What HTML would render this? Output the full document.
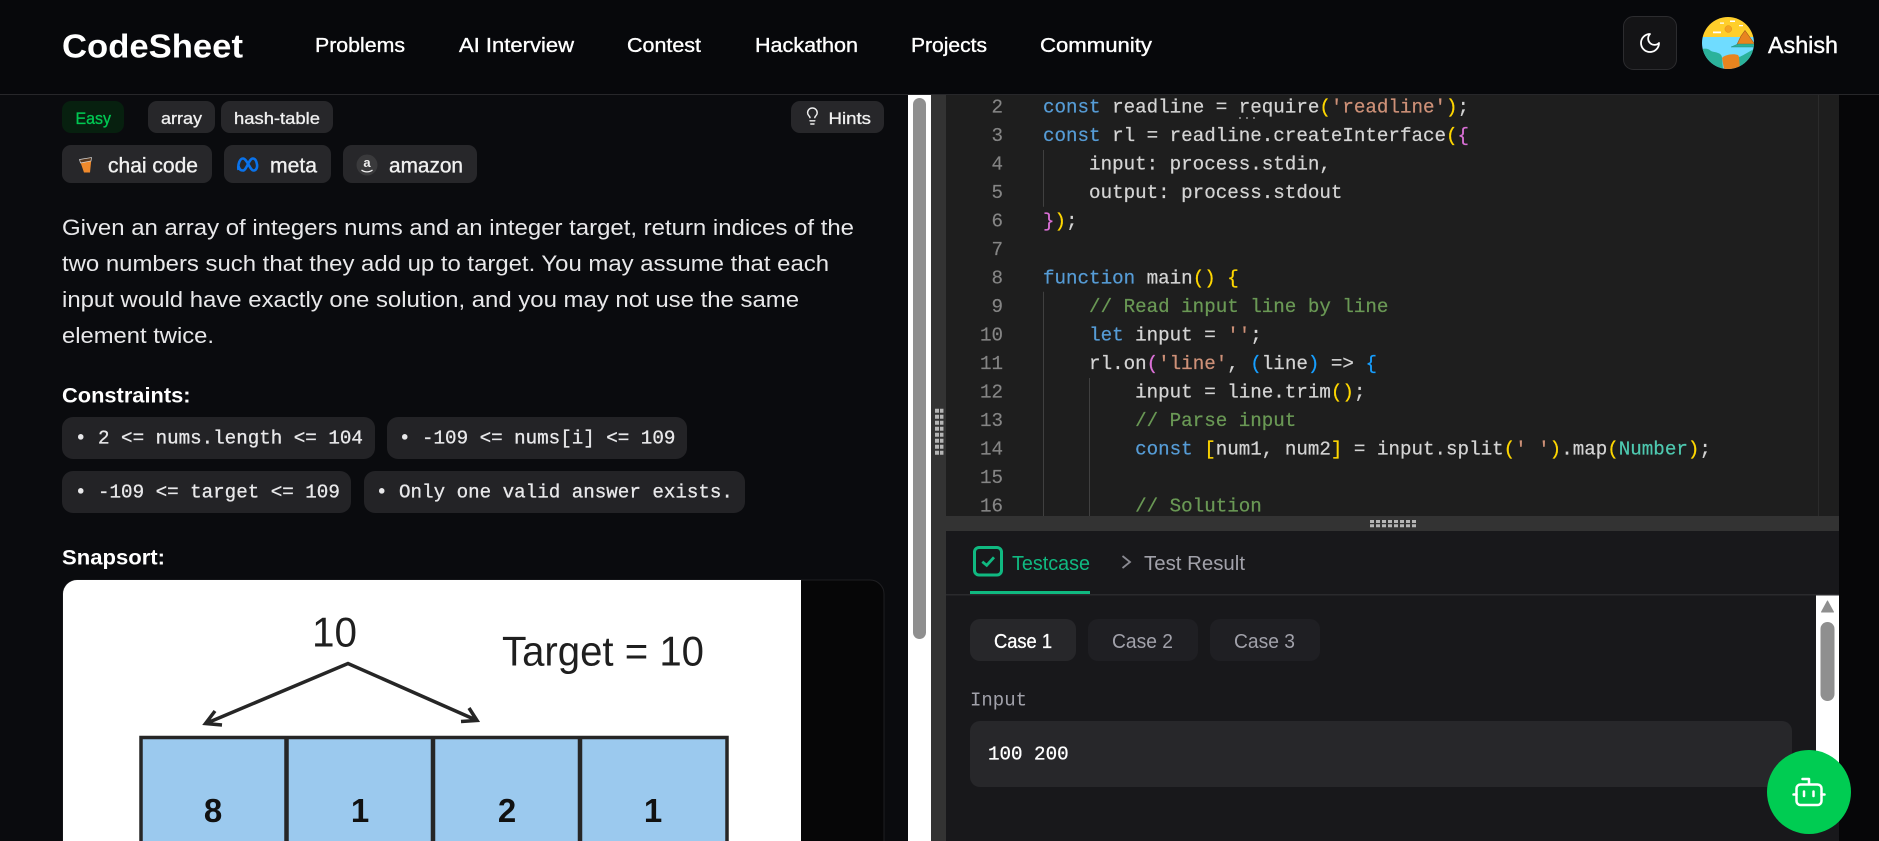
<!DOCTYPE html>
<html lang="en">
<head>
<meta charset="utf-8">
<title>CodeSheet</title>
<style>
html,body{margin:0;padding:0;width:1879px;height:841px;overflow:hidden;background:#060608}
svg{display:block;position:absolute;left:0;top:0}
text{font-family:"Liberation Sans",Arial,sans-serif;white-space:pre}
.m{font-family:"Liberation Mono",monospace;font-size:19.2px}
.c{font-family:"Liberation Mono",monospace;font-size:19.2px;fill:#d4d4d4;stroke:#d4d4d4;stroke-width:.22px}
.n{fill:#858585;stroke:#858585;stroke-width:.15px;text-anchor:end;font-family:"Liberation Mono",monospace;font-size:19.2px}
.k{fill:#569cd6;stroke:#569cd6}.s{fill:#ce9178;stroke:#ce9178}.g{fill:#6a9955;stroke:#6a9955}.y{fill:#ffd700;stroke:#ffd700}.p{fill:#da70d6;stroke:#da70d6}.b{fill:#179fff;stroke:#179fff}.t{fill:#4ec9b0;stroke:#4ec9b0}
.nav{font-size:20px;fill:#fff;stroke:#fff;stroke-width:.35px}
.tag{font-size:16.8px;fill:#f0f0f0;stroke:#f0f0f0;stroke-width:.3px}
.co{font-size:21px;fill:#f0f0f0;stroke:#f0f0f0;stroke-width:.35px}
.d{font-size:22.4px;fill:#e8e8ea}
.h{font-size:21.6px;fill:#fff;font-weight:bold}
.pill{fill:#e8e8ea;stroke:#e8e8ea;stroke-width:.3px}
.tab{font-size:20px;fill:#a1a1aa}
</style>
</head>
<body>
<svg xmlns="http://www.w3.org/2000/svg" width="1879" height="841" viewBox="0 0 1879 841">
<defs>
<clipPath id="ed"><rect x="946" y="95" width="893" height="421"/></clipPath>
<clipPath id="av"><circle cx="1728" cy="43" r="26"/></clipPath>
<clipPath id="im"><path d="M63 841V594a14 14 0 0 1 14-14H801V841Z"/></clipPath>
</defs>

<!-- backgrounds -->
<rect x="0" y="95" width="908" height="746" fill="#0a0b0e"/>
<rect x="908" y="95" width="23" height="746" fill="#fff"/>
<rect x="913" y="98" width="13" height="541" rx="6.5" fill="#8f8f8f"/>
<rect x="931" y="95" width="15" height="746" fill="#333"/>
<path d="M937 408.7V455" stroke="#b5b5b5" stroke-width="4" stroke-dasharray="4 2"/>
<path d="M941.7 408.7V455" stroke="#b5b5b5" stroke-width="3.5" stroke-dasharray="4 2"/>
<rect x="946" y="95" width="893" height="421" fill="#1e1e1e"/>
<rect x="946" y="516" width="893" height="15" fill="#333"/>
<path d="M1370 521.5H1416M1370 525.7H1416" stroke="#b5b5b5" stroke-width="3" stroke-dasharray="4 2"/>
<rect x="946" y="531" width="893" height="310" fill="#18181b"/>
<rect x="1839" y="95" width="40" height="746" fill="#060608"/>

<!-- header -->
<rect x="0" y="0" width="1879" height="94" fill="#07080b"/>
<rect x="0" y="94" width="1879" height="1" fill="#27272a"/>
<text x="62" y="57.3" font-size="33" font-weight="bold" fill="#fff" textLength="181" lengthAdjust="spacingAndGlyphs">CodeSheet</text>
<text class="nav" x="315" y="52" textLength="90" lengthAdjust="spacingAndGlyphs">Problems</text>
<text class="nav" x="459" y="52" textLength="115" lengthAdjust="spacingAndGlyphs">AI Interview</text>
<text class="nav" x="627" y="52" textLength="74" lengthAdjust="spacingAndGlyphs">Contest</text>
<text class="nav" x="755" y="52" textLength="103" lengthAdjust="spacingAndGlyphs">Hackathon</text>
<text class="nav" x="911" y="52" textLength="76" lengthAdjust="spacingAndGlyphs">Projects</text>
<text class="nav" x="1040" y="52" textLength="112" lengthAdjust="spacingAndGlyphs">Community</text>
<rect x="1623.5" y="16.5" width="53" height="53" rx="10" fill="#141416" stroke="#2c2c2f"/>
<path transform="translate(1638 31)" d="M12 3a6 6 0 0 0 9 9 9 9 0 1 1-9-9Z" fill="none" stroke="#fff" stroke-width="1.8" stroke-linejoin="round"/>
<g clip-path="url(#av)">
<rect x="1702" y="17" width="52" height="20" fill="#ffcf2b"/>
<rect x="1702" y="37" width="52" height="32" fill="#6fdcff"/>
<circle cx="1728.3" cy="29" r="3.4" fill="#f5a623" stroke="#e08a1e" stroke-width=".5"/>
<path d="M1713 31.500h8v1.800h-8zM1730 20.500h5v1.500h-5zM1720 22.500h4v1.300h-4zM1739 25h4v1.200h-4z" fill="#fff"/>
<path d="M1737 44.500L1741 36L1745 30.500L1749 36L1755 44.500Z" fill="#e8841f" stroke="#9c5a1a" stroke-width=".6"/>
<path d="M1731 47L1738 44H1756V47Z" fill="#2bb29b" stroke="#1e7f70" stroke-width=".4"/>
<path d="M1702 49c4-1 7 0 9 2 2 1 5 1 7 2 3 1 4 3 4 5l1 11h-21Z" fill="#2bb29b"/>
<path d="M1722 58c2-3 11-5 16-3 2 3 3 9 1 14h-15Z" fill="#e8841f"/>
<path d="M1740 69l-1-12c3-1 6-3 15-8v20Z" fill="#2bb29b"/>
</g>
<text x="1768" y="53" font-size="23" fill="#fff" stroke="#fff" stroke-width=".4" textLength="70" lengthAdjust="spacingAndGlyphs">Ashish</text>

<!-- badges -->
<rect x="62" y="101" width="62" height="32" rx="9" fill="#07200f"/>
<text class="tag" x="75.500" y="124" style="fill:#00c853;stroke:#00c853" textLength="35.500" lengthAdjust="spacingAndGlyphs">Easy</text>
<rect x="148" y="101" width="67" height="32" rx="9" fill="#27272a"/>
<text class="tag" x="161" y="124" textLength="41" lengthAdjust="spacingAndGlyphs">array</text>
<rect x="221" y="101" width="112" height="32" rx="9" fill="#27272a"/>
<text class="tag" x="234" y="124" textLength="86" lengthAdjust="spacingAndGlyphs">hash-table</text>
<rect x="791" y="101" width="93" height="32" rx="9" fill="#27272a"/>
<path transform="translate(802.800 106.400) scale(.8)" d="M15 14c.2-1 .7-1.7 1.500-2.500 1-.9 1.500-2.200 1.500-3.500A6 6 0 0 0 6 8c0 1 .2 2.200 1.500 3.500.7.7 1.300 1.500 1.500 2.500M9 18h6M10 22h4" fill="none" stroke="#f0f0f0" stroke-width="1.800" stroke-linecap="round"/>
<text class="tag" x="828.500" y="124" textLength="42.500" lengthAdjust="spacingAndGlyphs">Hints</text>

<rect x="62" y="145" width="150" height="38" rx="9" fill="#27272a"/>
<path d="M79.500 159.500L91.500 157.500L90 172.500H84Z" fill="#f08a2c"/>
<path d="M79.500 159.500L91.500 157.500L91 161L80.500 163Z" fill="#5a3a20" stroke="#d8d8d8" stroke-width=".7"/>
<text class="co" x="108" y="172.700" textLength="90" lengthAdjust="spacingAndGlyphs">chai code</text>
<rect x="224" y="145" width="107" height="38" rx="9" fill="#27272a"/>
<path d="M238.500 170C237.500 164 240 158.500 243 158.500C247 158.500 250 170.500 253.500 170.500C256.500 170.500 257.500 167 257 164.500C256.500 161 255 158.500 252.800 158.500C249 158.500 246.500 170.500 243 170.500C240.500 170.500 239 169 238.500 166" fill="none" stroke="#0a72ea" stroke-width="2.600"/>
<text class="co" x="270" y="172.700" textLength="47" lengthAdjust="spacingAndGlyphs">meta</text>
<rect x="343" y="145" width="134" height="38" rx="9" fill="#27272a"/>
<circle cx="367" cy="165" r="10.500" fill="#3a3a3c"/>
<text x="367" y="167" font-size="13" font-weight="bold" fill="#f0f0f0" text-anchor="middle">a</text>
<path d="M361.500 170c3 2.500 8 2.500 11 0" fill="none" stroke="#f0f0f0" stroke-width="1.200"/>
<text class="co" x="389" y="172.700" textLength="74" lengthAdjust="spacingAndGlyphs">amazon</text>

<!-- description -->
<text class="d" x="62" y="235" textLength="792" lengthAdjust="spacingAndGlyphs">Given an array of integers nums and an integer target, return indices of the</text>
<text class="d" x="62" y="271" textLength="767" lengthAdjust="spacingAndGlyphs">two numbers such that they add up to target. You may assume that each</text>
<text class="d" x="62" y="307" textLength="737" lengthAdjust="spacingAndGlyphs">input would have exactly one solution, and you may not use the same</text>
<text class="d" x="62" y="343" textLength="152" lengthAdjust="spacingAndGlyphs">element twice.</text>

<text class="h" x="62" y="402.700" textLength="128.500" lengthAdjust="spacingAndGlyphs">Constraints:</text>
<rect x="62" y="417" width="313" height="42" rx="11" fill="#232326"/>
<text class="m pill" x="75" y="443.500">• 2 &lt;= nums.length &lt;= 104</text>
<rect x="387" y="417" width="300" height="42" rx="11" fill="#232326"/>
<text class="m pill" x="399" y="443.500">• -109 &lt;= nums[i] &lt;= 109</text>
<rect x="62" y="471" width="289" height="42" rx="11" fill="#232326"/>
<text class="m pill" x="75" y="497.500">• -109 &lt;= target &lt;= 109</text>
<rect x="364" y="471" width="381" height="42" rx="11" fill="#232326"/>
<text class="m pill" x="376" y="497.500">• Only one valid answer exists.</text>

<text class="h" x="62" y="564.500" textLength="103" lengthAdjust="spacingAndGlyphs">Snapsort:</text>

<!-- image -->
<rect x="63" y="580" width="821" height="300" rx="14" fill="#060607" stroke="#1f1f22"/>
<g clip-path="url(#im)">
<rect x="63" y="580" width="738" height="261" fill="#fff"/>
<text x="312" y="646.700" font-size="42" fill="#1f1f1f" textLength="45" lengthAdjust="spacingAndGlyphs">10</text>
<text x="502" y="665.700" font-size="42" fill="#1f1f1f" textLength="202" lengthAdjust="spacingAndGlyphs">Target = 10</text>
<path d="M207 723L348 663.500L476 720M222 725L205.500 723.500L215 711M461 721.500L477 720.500L469 708" fill="none" stroke="#262626" stroke-width="3.500"/>
<rect x="141" y="737.500" width="586" height="120" fill="#9bc9ee" stroke="#262626" stroke-width="3.500"/>
<path d="M286.500 736V841M433 736V841M580 736V841" stroke="#262626" stroke-width="4.500"/>
<g font-size="33" font-weight="bold" fill="#111" text-anchor="middle">
<text x="213" y="822">8</text><text x="360" y="822">1</text><text x="507" y="822">2</text><text x="653" y="822">1</text>
</g>
</g>

<!-- editor -->
<path d="M1043.500 150V206.700M1043.500 291.700V516M1089.500 378V516" stroke="#404040" stroke-width="1"/>
<path d="M1818.500 95V516" stroke="#2b2b2b"/>
<g clip-path="url(#ed)">
<g transform="translate(0 -1.7)">
<text class="n" x="1003" y="114">2</text>
<text class="n" x="1003" y="142.500">3</text>
<text class="n" x="1003" y="171">4</text>
<text class="n" x="1003" y="199.500">5</text>
<text class="n" x="1003" y="228">6</text>
<text class="n" x="1003" y="256.500">7</text>
<text class="n" x="1003" y="285">8</text>
<text class="n" x="1003" y="313.500">9</text>
<text class="n" x="1003" y="342">10</text>
<text class="n" x="1003" y="370.500">11</text>
<text class="n" x="1003" y="399">12</text>
<text class="n" x="1003" y="427.500">13</text>
<text class="n" x="1003" y="456">14</text>
<text class="n" x="1003" y="484.500">15</text>
<text class="n" x="1003" y="513">16</text>
<text class="c" x="1043" y="114"><tspan class="k">const</tspan> readline = require<tspan class="y">(</tspan><tspan class="s">'readline'</tspan><tspan class="y">)</tspan>;</text>
<text class="c" x="1043" y="142.500"><tspan class="k">const</tspan> rl = readline.createInterface<tspan class="y">(</tspan><tspan class="p">{</tspan></text>
<text class="c" x="1043" y="171">    input: process.stdin,</text>
<text class="c" x="1043" y="199.500">    output: process.stdout</text>
<text class="c" x="1043" y="228"><tspan class="p">}</tspan><tspan class="y">)</tspan>;</text>
<text class="c" x="1043" y="285"><tspan class="k">function</tspan> main<tspan class="y">() {</tspan></text>
<text class="c" x="1043" y="313.500"><tspan class="g">    // Read input line by line</tspan></text>
<text class="c" x="1043" y="342">    <tspan class="k">let</tspan> input = <tspan class="s">''</tspan>;</text>
<text class="c" x="1043" y="370.500">    rl.on<tspan class="p">(</tspan><tspan class="s">'line'</tspan>, <tspan class="b">(</tspan>line<tspan class="b">)</tspan> =&gt; <tspan class="b">{</tspan></text>
<text class="c" x="1043" y="399">        input = line.trim<tspan class="y">()</tspan>;</text>
<text class="c" x="1043" y="427.500"><tspan class="g">        // Parse input</tspan></text>
<text class="c" x="1043" y="456">        <tspan class="k">const</tspan> <tspan class="y">[</tspan>num1, num2<tspan class="y">]</tspan> = input.split<tspan class="y">(</tspan><tspan class="s">' '</tspan><tspan class="y">)</tspan>.map<tspan class="y">(</tspan><tspan class="t">Number</tspan><tspan class="y">)</tspan>;</text>
<text class="c" x="1043" y="513"><tspan class="g">        // Solution</tspan></text>
</g>
<path d="M1239 118h2M1246 118h2M1253 118h2" stroke="#999" stroke-width="1.500"/>
</g>

<!-- bottom panel -->
<rect x="974.500" y="547.500" width="27" height="27.500" rx="4.500" fill="none" stroke="#10b981" stroke-width="3"/>
<path d="M982.300 561.700L986.700 565.300L994 557.300" fill="none" stroke="#10b981" stroke-width="2.800"/>
<text class="tab" x="1012" y="570" style="fill:#10b981" textLength="78" lengthAdjust="spacingAndGlyphs">Testcase</text>
<path d="M1122.500 556L1130 562L1122.500 568" fill="none" stroke="#8a8a92" stroke-width="1.800"/>
<text class="tab" x="1144" y="570" textLength="101" lengthAdjust="spacingAndGlyphs">Test Result</text>
<rect x="946" y="594" width="893" height="1.500" fill="#2a2a2d"/>
<rect x="970" y="591" width="120" height="3" fill="#10b981"/>

<rect x="1816" y="595.500" width="23" height="200" fill="#fff"/>
<path d="M1827.500 601L1821.500 612H1833.500Z" fill="#8f8f8f" stroke="#8f8f8f" stroke-linejoin="round"/>
<rect x="1820.500" y="622" width="14" height="79" rx="7" fill="#8f8f8f"/>

<rect x="970" y="619" width="106" height="42" rx="10" fill="#27272a"/>
<text class="tab" x="994" y="648" style="fill:#fff;stroke:#fff;stroke-width:.3px" textLength="58" lengthAdjust="spacingAndGlyphs">Case 1</text>
<rect x="1088" y="619" width="110" height="42" rx="10" fill="#1f1f23"/>
<text class="tab" x="1112" y="648" textLength="61" lengthAdjust="spacingAndGlyphs">Case 2</text>
<rect x="1210" y="619" width="110" height="42" rx="10" fill="#1f1f23"/>
<text class="tab" x="1234" y="648" textLength="61" lengthAdjust="spacingAndGlyphs">Case 3</text>

<text class="m" x="970" y="705.700" style="font-size:19px;fill:#a1a1aa">Input</text>
<rect x="970" y="721" width="822" height="66" rx="10" fill="#27272a"/>
<text class="m" x="988" y="759.700" fill="#fff" stroke="#fff" stroke-width=".3">100 200</text>

<!-- robot button -->
<circle cx="1809" cy="792" r="42" fill="#00cc52"/>
<g fill="none" stroke="#fff" stroke-width="2.500" stroke-linecap="round" stroke-linejoin="round">
<rect x="1796.500" y="784.500" width="25" height="20.500" rx="4"/>
<path d="M1809 784V779H1802.500M1793.500 794.500H1796.500M1821.500 794.500H1824.500M1804 791.500V796M1813.500 791.500V796"/>
</g>
</svg>
</body>
</html>
